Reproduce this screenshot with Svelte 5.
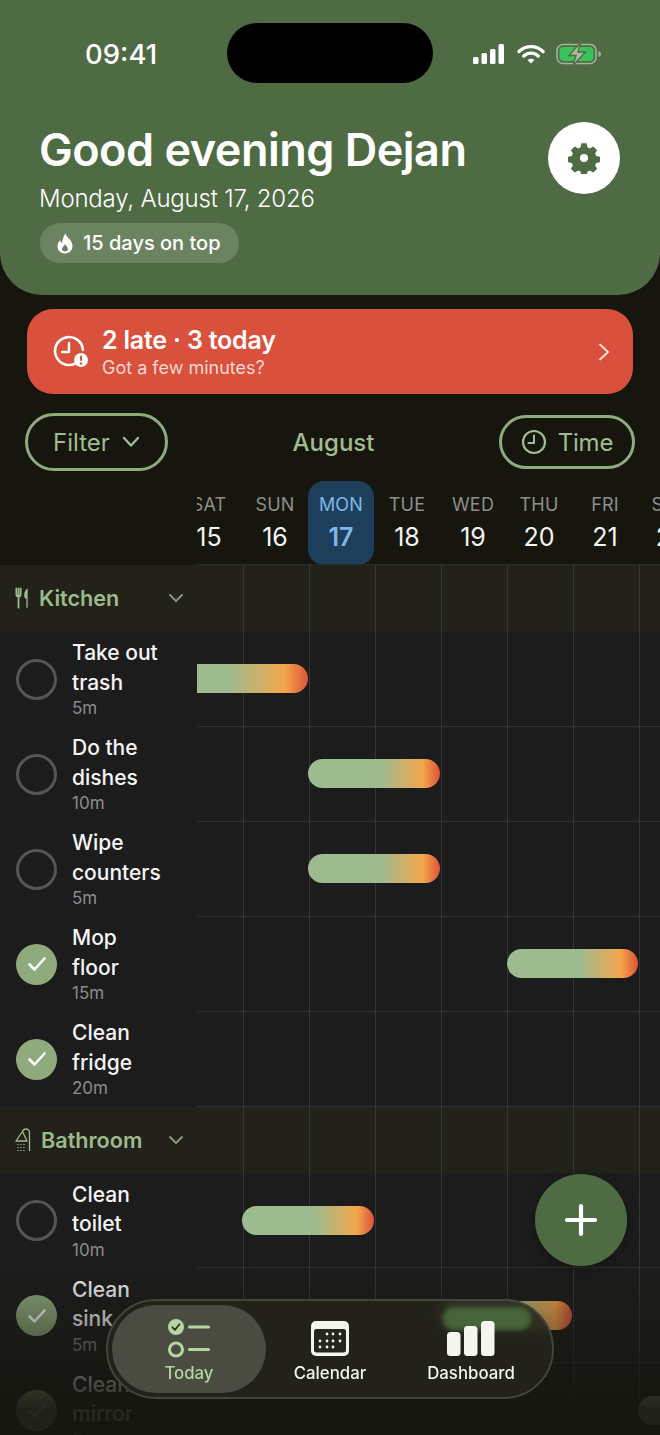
<script>
  const days = [
    { label: "SAT", num: 15 },
    { label: "SUN", num: 16 },
    { label: "MON", num: 17, today: true },
    { label: "TUE", num: 18 },
    { label: "WED", num: 19 },
    { label: "THU", num: 20 },
    { label: "FRI", num: 21 },
    { label: "SUN", num: 22 }
  ];

  // start = px from the left edge of the chart, width in px
  const sections = [
    {
      name: "Kitchen",
      icon: "fork",
      tasks: [
        { name: ["Take out", "trash"], time: "5m", start: -65, width: 176 },
        { name: ["Do the", "dishes"], time: "10m", start: 111, width: 132 },
        { name: ["Wipe", "counters"], time: "5m", start: 111, width: 132 },
        { name: ["Mop", "floor"], time: "15m", done: true, start: 310, width: 131 },
        { name: ["Clean", "fridge"], time: "20m", done: true }
      ]
    },
    {
      name: "Bathroom",
      icon: "shower",
      tasks: [
        { name: ["Clean", "toilet"], time: "10m", start: 45, width: 132 },
        { name: ["Clean", "sink"], time: "5m", done: true, start: 243, width: 132 },
        { name: ["Clean", "mirror"], time: "5m", done: true, start: 441, width: 132 }
      ]
    }
  ];

  const calendarDots = [
    [16, 13], [22, 13], [29, 13],
    [9, 20], [16, 20], [22, 20], [29, 20],
    [9, 26], [16, 26], [22, 26]
  ];
</script>

<div class="phone">
  <header class="hero">
    <div class="status">
      <span class="clock">09:41</span>
      <div class="island"></div>
      <div class="status-icons">
        <svg width="34" height="20" viewBox="0 0 34 20"><rect x="1" y="13" width="5.5" height="7" rx="1.5" fill="#fff"/><rect x="9.5" y="9" width="5.5" height="11" rx="1.5" fill="#fff"/><rect x="18" y="5" width="5.5" height="15" rx="1.5" fill="#fff"/><rect x="26.5" y="0" width="5.5" height="20" rx="1.5" fill="#fff"/></svg>
        <svg width="28" height="20" viewBox="0 0 28 20"><path d="M2 7.5C9 1 19 1 26 7.5" fill="none" stroke="#fff" stroke-width="3.4" stroke-linecap="round"/><path d="M6.8 12C11 8.2 17 8.2 21.2 12" fill="none" stroke="#fff" stroke-width="3.4" stroke-linecap="round"/><path d="M10.6 16L14 19.6L17.4 16C15.4 14.4 12.6 14.4 10.6 16Z" fill="#fff"/></svg>
        <svg width="46" height="24" viewBox="0 0 46 24"><rect x="1" y="2.5" width="39" height="19" rx="6" fill="none" stroke="#a3b39a" stroke-width="1.6"/><rect x="3.5" y="5" width="34" height="14" rx="4" fill="#3ac25c"/><path d="M42.5 9v6c1.500-.5 2.500-1.500 2.500-3s-1-2.500-2.500-3Z" fill="#a3b39a"/><path d="M24.500 0.500L13 13.500h7L17 23.500L29.500 10h-7.500Z" fill="#a9b8a0" stroke="#4f6b44" stroke-width="1.300"/></svg>
      </div>
    </div>
    <div class="hero-body">
      <div>
        <h1>Good evening Dejan</h1>
        <p class="date">Monday, August 17, 2026</p>
        <div class="streak">
          <svg width="16" height="21" viewBox="0 0 16 21"><path fill-rule="evenodd" d="M8.500 0.500C9 4 15.500 7 15.500 13C15.500 17.500 12.200 20.500 8 20.500C3.800 20.500 0.500 17.500 0.500 13.300C0.500 10.500 2 8.300 3.300 7C3.500 8.500 4 9.500 5 10C5.500 6.500 6.500 3 8.500 0.500ZM8 11C7.500 13 5 14 5 16C5 17.600 6.300 18.500 8 18.500C9.700 18.500 11 17.600 11 16C11 14 9 13 8 11Z" fill="#fff"/></svg>
          <span>15 days on top</span>
        </div>
      </div>
      <button class="settings" aria-label="Settings">
        <svg width="32" height="32" viewBox="0 0 24 24"><path fill-rule="evenodd" fill="#4f6b44" d="M10 1h4l.6 3c.6.2 1.200.5 1.700.8l2.700-1.500 2.800 2.800-1.500 2.700c.4.500.6 1.100.8 1.700l3 .6v4l-3 .6c-.2.600-.5 1.200-.8 1.700l1.500 2.700-2.800 2.800-2.700-1.500c-.5.400-1.100.6-1.700.8l-.6 3h-4l-.6-3c-.6-.2-1.200-.5-1.700-.8l-2.700 1.500-2.800-2.800 1.500-2.700c-.4-.5-.6-1.100-.8-1.700l-3-.6v-4l3-.6c.2-.6.5-1.200.8-1.700L2.200 6.100 5 3.300l2.700 1.500c.5-.4 1.100-.6 1.700-.8ZM12 9a3 3 0 1 0 0 6 3 3 0 0 0 0-6Z"/></svg>
      </button>
    </div>
  </header>

  <div class="alert">
    <svg class="alert-icon" width="36" height="34" viewBox="0 0 36 34">
      <path d="M24 27.500A14 14 0 1 1 30 15" fill="none" stroke="#fff" stroke-width="2.600" stroke-linecap="round"/>
      <path d="M16 8v9H9" fill="none" stroke="#fff" stroke-width="2.400" stroke-linecap="round" stroke-linejoin="round"/>
      <circle cx="28" cy="25" r="7" fill="#fff"/>
      <rect x="27" y="20.500" width="2" height="5.500" rx="1" fill="#d9503c"/>
      <circle cx="28" cy="28.500" r="1.200" fill="#d9503c"/>
    </svg>
    <div class="alert-text">
      <strong>2 late · 3 today</strong>
      <span>Got a few minutes?</span>
    </div>
    <svg class="alert-arrow" width="12" height="18" viewBox="0 0 12 18"><path d="M2 1.500L10 9L2 16.500" fill="none" stroke="#fff" stroke-opacity=".85" stroke-width="1.800" stroke-linecap="round" stroke-linejoin="round"/></svg>
  </div>

  <div class="controls">
    <button class="pill filter">
      Filter
      <svg width="18" height="12" viewBox="0 0 18 12"><path d="M2 2L9 9.500L16 2" fill="none" stroke="#a1bd8f" stroke-width="2.400" stroke-linecap="round" stroke-linejoin="round"/></svg>
    </button>
    <span class="month">August</span>
    <button class="pill time">
      <svg width="26" height="26" viewBox="0 0 26 26"><circle cx="13" cy="13" r="11" fill="none" stroke="#a1bd8f" stroke-width="2.200"/><path d="M13 6.500V14H7.500" fill="none" stroke="#a1bd8f" stroke-width="2" stroke-linecap="round" stroke-linejoin="round"/></svg>
      Time
    </button>
  </div>

  <div class="days">
    <div class="days-spacer"></div>
    <div class="days-track">
      {#each days as day}
        <div class="day" class:today={day.today}>
          <span class="day-label">{day.label}</span>
          <span class="day-num">{day.num}</span>
        </div>
      {/each}
    </div>
  </div>

  <div class="board">
    {#each sections as section}
      <div class="section-row">
        <div class="section-name">
          {#if section.icon === "fork"}
            <svg width="14" height="24" viewBox="0 0 16 24"><path d="M1.500 1v6.500c0 2 1 3 2.500 3s2.500-1 2.500-3V1M4 1v22" fill="none" stroke="#9dba8b" stroke-width="2" stroke-linecap="round"/><path d="M14.500 1c-2.500 1-4 4-4 8 0 2 .8 3.500 2.500 3.800V23h1.500Z" fill="#9dba8b"/></svg>
          {:else}
            <svg width="16" height="24" viewBox="0 0 16 24"><path d="M14.500 23V4.500C14.500 2.500 13 1 11 1S8 2 7.500 3.500" fill="none" stroke="#9dba8b" stroke-width="1.300"/><path d="M7.500 3.500L1 13h11Z" fill="none" stroke="#9dba8b" stroke-width="1.300" stroke-linejoin="round"/><path d="M3 16v1M6 16v1M9 16v1M3 19v1M6 19v1M9 19v1M3 22v1M6 22v1M9 22v1" stroke="#9dba8b" stroke-width="1.300"/></svg>
          {/if}
          <span>{section.name}</span>
          <svg class="section-chev" width="16" height="10" viewBox="0 0 16 10"><path d="M2 2L8 8L14 2" fill="none" stroke="#8a9a7c" stroke-width="1.800" stroke-linecap="round" stroke-linejoin="round"/></svg>
        </div>
        <div class="lane lane-section"></div>
      </div>
      {#each section.tasks as task}
        <div class="task-row">
          <div class="task">
            <span class="check" class:done={task.done}>
              {#if task.done}
                <svg width="20" height="16" viewBox="0 0 20 16"><path d="M2.500 8.500L7.500 13.500L17.500 2.500" fill="none" stroke="#fff" stroke-width="2.600" stroke-linecap="round" stroke-linejoin="round"/></svg>
              {/if}
            </span>
            <div class="task-text">
              <span class="task-name">{task.name[0]}<br />{task.name[1]}</span>
              <span class="task-time">{task.time}</span>
            </div>
          </div>
          <div class="lane">
            {#if task.width}
              <div class="bar" style="left: {task.start}px; width: {task.width}px"></div>
            {/if}
          </div>
        </div>
      {/each}
    {/each}
  </div>

  <div class="fade"></div>

  <button class="fab" aria-label="Add">
    <svg width="34" height="34" viewBox="0 0 34 34"><path d="M17 3V31M3 17H31" stroke="#fff" stroke-width="4.200" stroke-linecap="round"/></svg>
  </button>

  <nav class="tabbar">
    <div class="glint"></div>
    <div class="tab active">
      <div class="tab-icon">
        <svg width="44" height="40" viewBox="0 0 44 40">
          <circle cx="9" cy="9" r="8" fill="#b5d6a0"/>
          <path d="M5.500 9.300L8 11.800L12.500 6.300" fill="none" stroke="#2c2e26" stroke-width="1.800" stroke-linecap="round" stroke-linejoin="round"/>
          <rect x="21" y="7.500" width="22" height="3" rx="1.500" fill="#b5d6a0"/>
          <circle cx="9" cy="31.500" r="6.500" fill="none" stroke="#b5d6a0" stroke-width="3"/>
          <rect x="21" y="30" width="22" height="3" rx="1.500" fill="#b5d6a0"/>
        </svg>
      </div>
      <span>Today</span>
    </div>
    <div class="tab">
      <div class="tab-icon">
        <svg width="38" height="35" viewBox="0 0 38 35">
          <rect x="0" y="0" width="38" height="35" rx="5" fill="#f6f6f0"/>
          <rect x="3" y="8" width="32" height="23.500" rx="2.500" fill="#25251f"/>
          {#each calendarDots as [x, y]}
            <circle cx={x} cy={y} r="1.400" fill="#f6f6f0"/>
          {/each}
        </svg>
      </div>
      <span>Calendar</span>
    </div>
    <div class="tab">
      <div class="tab-icon">
        <svg width="48" height="35" viewBox="0 0 48 35">
          <rect x="0" y="11" width="13.500" height="24" rx="3.500" fill="#f6f6f0"/>
          <rect x="17" y="5" width="13.500" height="30" rx="3.500" fill="#f6f6f0"/>
          <rect x="34" y="0" width="13.500" height="35" rx="3.500" fill="#f6f6f0"/>
        </svg>
      </div>
      <span>Dashboard</span>
    </div>
  </nav>
</div>

<style>
  :global(body) {
    margin: 0;
    background: #16160f;
  }

  .phone {
    position: relative;
    width: 660px;
    height: 1435px;
    overflow: hidden;
    background: #16160f;
    font-family: Inter, "Liberation Sans", sans-serif;
    color: #fff;
  }

  button {
    font-family: inherit;
    cursor: pointer;
  }

  /* Header */
  .hero {
    height: 295px;
    box-sizing: border-box;
    background: #4f6b44;
    border-radius: 0 0 42px 42px;
  }
  .status {
    position: relative;
    height: 122px;
    box-sizing: border-box;
    padding: 37px 58px 0 85px;
    display: flex;
    justify-content: space-between;
  }
  .clock {
    font-size: 27.500px;
    line-height: 34px;
    font-weight: 500;
  }
  .island {
    position: absolute;
    left: 227px;
    top: 23px;
    width: 206px;
    height: 60px;
    border-radius: 30px;
    background: #000;
  }
  .status-icons {
    display: flex;
    align-items: center;
    gap: 11px;
    height: 34px;
  }
  .hero-body {
    display: flex;
    justify-content: space-between;
    padding: 0 40px;
  }
  h1 {
    margin: 0 0 0 -1px;
    font-size: 45px;
    line-height: 56px;
    font-weight: 600;
    letter-spacing: -0.5px;
  }
  .date {
    margin: 6px 0 0 -1px;
    font-size: 24px;
    line-height: 30px;
    font-weight: 300;
    letter-spacing: -0.2px;
  }
  .streak {
    margin-top: 9px;
    display: inline-flex;
    align-items: center;
    gap: 10px;
    height: 40px;
    padding: 0 18px 0 17px;
    border-radius: 20px;
    background: #6c8361;
    font-size: 20px;
    font-weight: 500;
  }
  .settings {
    width: 72px;
    height: 72px;
    border: none;
    padding: 0;
    border-radius: 50%;
    background: #fff;
    display: flex;
    align-items: center;
    justify-content: center;
  }

  /* Overdue banner */
  .alert {
    margin: 14px 27px 0;
    height: 85px;
    box-sizing: border-box;
    padding: 0 23px 0 26px;
    border-radius: 26px;
    background: #d9503c;
    display: flex;
    align-items: center;
    gap: 13px;
  }
  .alert-text {
    flex: 1;
    display: flex;
    flex-direction: column;
  }
  .alert-text strong {
    font-size: 25px;
    line-height: 32px;
    font-weight: 600;
    letter-spacing: -0.2px;
  }
  .alert-text span {
    font-size: 18px;
    line-height: 23px;
    color: #f6d9d2;
  }

  /* Filter / month */
  .controls {
    height: 58px;
    margin-top: 19px;
    padding: 0 25px;
    display: flex;
    align-items: center;
    justify-content: space-between;
  }
  .pill {
    box-sizing: border-box;
    border: 3px solid #8fab7d;
    background: transparent;
    color: #a1bd8f;
    font-size: 24px;
    font-weight: 400;
    display: flex;
    align-items: center;
    justify-content: center;
  }
  .filter {
    width: 143px;
    height: 58px;
    border-radius: 29px;
    gap: 12px;
    padding-right: 6px;
  }
  .time {
    width: 136px;
    height: 54px;
    border-radius: 27px;
    gap: 11px;
    letter-spacing: -0.2px;
  }
  .month {
    font-size: 24px;
    font-weight: 500;
    color: #a1bd8f;
  }

  /* Day header */
  .days {
    margin-top: 10px;
    height: 84px;
    display: flex;
  }
  .days-spacer {
    width: 197px;
    flex: none;
  }
  .days-track {
    flex: 1;
    overflow: hidden;
    display: flex;
    border-bottom: 1px solid #2a2a25;
    box-sizing: border-box;
    height: 84px;
  }
  .day {
    flex: none;
    width: 66px;
    display: flex;
    flex-direction: column;
    align-items: center;
    box-sizing: border-box;
    padding-top: 13px;
    border-radius: 16px;
    color: #8e8e8c;
  }
  .day:first-child {
    margin-left: -21px;
  }
  .day-label {
    font-size: 18px;
    line-height: 22px;
    letter-spacing: 0.2px;
  }
  .day-num {
    margin-top: 5px;
    font-size: 25px;
    line-height: 32px;
    color: #f4f4f2;
  }
  .today {
    background: #1d3f5b;
    color: #7db7e8;
    height: 84px;
  }
  .today .day-num {
    color: #7db7e8;
    font-weight: 600;
  }

  /* Board */
  .section-row,
  .task-row {
    display: flex;
  }
  .section-row {
    height: 66.500px;
    background: #22221a;
  }
  .section-name {
    width: 197px;
    flex: none;
    box-sizing: border-box;
    padding-left: 15px;
    display: flex;
    align-items: center;
    gap: 10px;
    color: #9dba8b;
    font-size: 21.600px;
    font-weight: 600;
  }
  .section-chev {
    position: absolute;
    left: 168px;
  }
  .task-row {
    height: 95px;
  }
  .task {
    width: 197px;
    flex: none;
    box-sizing: border-box;
    padding-left: 16px;
    background: #1c1c1c;
    display: flex;
    align-items: center;
    gap: 15px;
  }
  .check {
    width: 41px;
    height: 41px;
    box-sizing: border-box;
    border: 3px solid #555555;
    border-radius: 50%;
    flex: none;
    display: flex;
    align-items: center;
    justify-content: center;
  }
  .check.done {
    background: #8fab7d;
    border: none;
  }
  .task-text {
    display: flex;
    flex-direction: column;
    padding-bottom: 1px;
  }
  .task-name {
    font-size: 21px;
    line-height: 29.500px;
    font-weight: 500;
    color: #f6f6f6;
  }
  .task-time {
    margin-top: 1px;
    font-size: 17px;
    line-height: 21px;
    color: #8c8c8c;
  }
  .lane {
    position: relative;
    flex: 1;
    overflow: hidden;
    background-color: #1c1c1c;
    background-image: linear-gradient(to right, transparent 46px, #363636 46px, #363636 47px, transparent 47px);
    background-size: 66px 100%;
    border-bottom: 1px solid #303030;
  }
  .lane-section {
    background-color: #22221a;
    border-bottom: none;
  }
  .bar {
    position: absolute;
    top: 32.500px;
    height: 29px;
    border-radius: 14.500px;
    background: linear-gradient(to right, #9dbb8e 0, #9dbb8e 55%, #f3a64c 87%, #dd5238 100%);
  }

  /* Things on top */
  .fade {
    position: absolute;
    left: 0;
    right: 0;
    bottom: 0;
    height: 175px;
    background: linear-gradient(to bottom, rgba(22, 22, 15, 0), rgba(22, 22, 15, 0.92) 85%);
    pointer-events: none;
  }
  .fab {
    position: absolute;
    left: 535px;
    top: 1174px;
    width: 92px;
    height: 92px;
    border: none;
    padding: 0;
    border-radius: 50%;
    background: #4f6b44;
    box-shadow: 0 4px 14px rgba(0, 0, 0, 0.3);
    display: flex;
    align-items: center;
    justify-content: center;
  }
  .tabbar {
    position: absolute;
    left: 106px;
    top: 1299px;
    width: 448px;
    height: 100px;
    box-sizing: border-box;
    padding: 0 4px;
    border: 2px solid #45453a;
    border-radius: 50px;
    background: rgba(36, 36, 28, 0.86);
    backdrop-filter: blur(6px);
    display: flex;
    align-items: center;
    overflow: hidden;
  }
  /* blurred chart bar seen through the glass */
  .glint {
    position: absolute;
    left: 335px;
    top: 6px;
    width: 88px;
    height: 23px;
    border-radius: 12px;
    background: #476339;
    filter: blur(2px);
  }
  .tab {
    position: relative;
    height: 88px;
    width: 128px;
    flex: none;
    display: flex;
    flex-direction: column;
    align-items: center;
    justify-content: flex-end;
    gap: 5px;
    font-size: 16.800px;
    line-height: 20px;
    font-weight: 500;
    color: #f4f4ee;
    padding-bottom: 10px;
    box-sizing: border-box;
  }
  .tab:nth-of-type(4) {
    width: 154px;
  }
  .tab-icon {
    height: 40px;
    display: flex;
    align-items: center;
  }
  .tab.active {
    width: 154px;
    border-radius: 44px;
    background: #4a4b41;
    color: #b5d6a0;
  }
</style>
